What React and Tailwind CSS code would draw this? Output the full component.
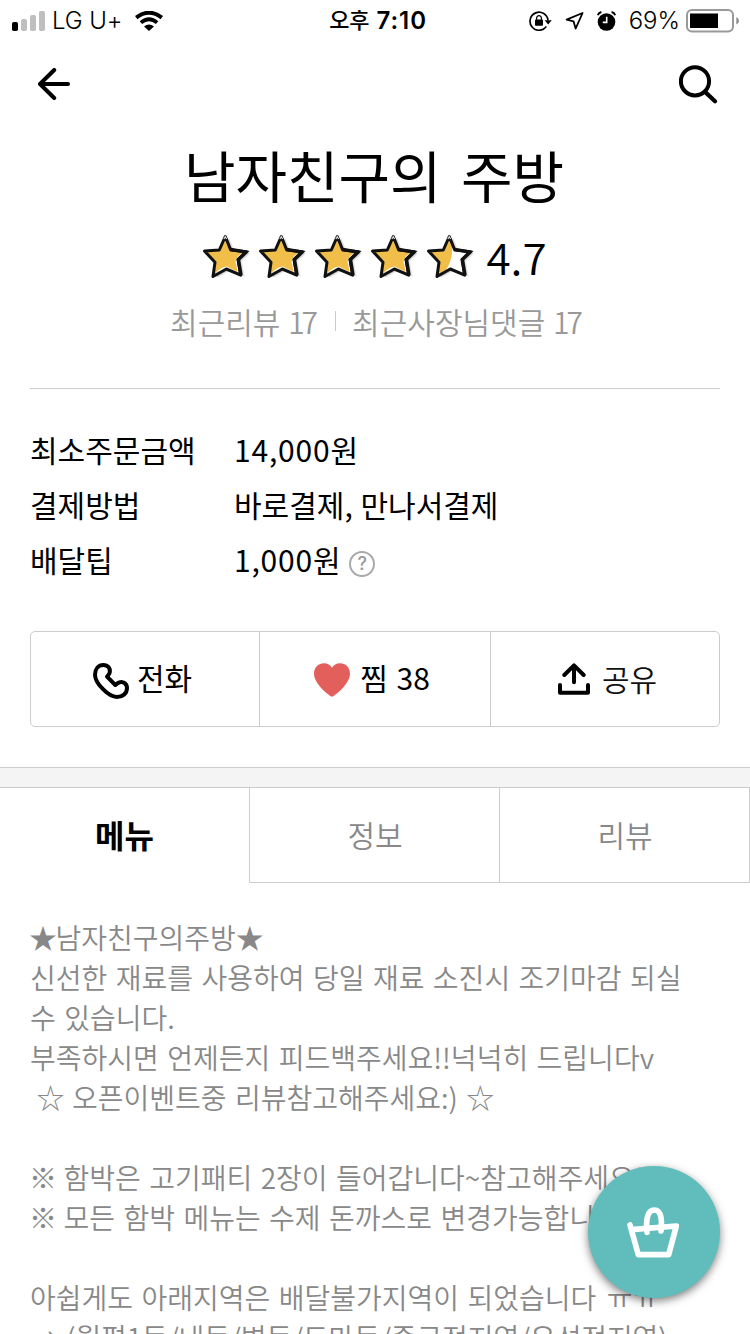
import React, { useState } from "react";

const NOTICE_LINES = [
  "신선한 재료를 사용하여 당일 재료 소진시 조기마감 되실",
  "수 있습니다.",
  "부족하시면 언제든지 피드백주세요!!넉넉히 드립니다v",
];

const INFO_ROWS = [
  { label: "최소주문금액", value: "14,000원", numeric: true },
  { label: "결제방법", value: "바로결제, 만나서결제" },
  { label: "배달팁", value: "1,000원", numeric: true, help: true },
];

const TABS = ["메뉴", "정보", "리뷰"];

const STAR_PATH =
  "M24.3 5.5L29.7 19L45.5 20.7L37 28.8L39.7 44.2L25.3 38L12 45.5L14 31.3L3.5 20L18.3 19Z";

const SignalIcon = () => (
  <svg className="h-5 w-[33px]" viewBox="0 0 33 20">
    <rect x="0" y="11" width="6" height="9" rx="1.8" fill="#000" />
    <rect x="9" y="8" width="6" height="12" rx="1.8" fill="#bfbfbf" />
    <rect x="18" y="4" width="6" height="16" rx="1.8" fill="#bfbfbf" />
    <rect x="27" y="0" width="6" height="20" rx="1.8" fill="#bfbfbf" />
  </svg>
);

const WifiIcon = () => (
  <svg className="h-5 w-7" viewBox="0 0 28 20" fill="none" stroke="#000">
    <path d="M1.2 6.6Q14 -3.2 26.8 6.6" strokeWidth="4" />
    <path d="M5.9 11.6Q14 5 22.1 11.6" strokeWidth="3.8" />
    <path d="M9 15.6Q14 11.2 19 15.6L14 20Z" fill="#000" stroke="none" />
  </svg>
);

const RotationLockIcon = () => (
  <svg className="h-5 w-[23px]" viewBox="0 0 23 20">
    <path
      d="M17.3 15.6A9 9 0 1 1 19 9.4"
      fill="none"
      stroke="#000"
      strokeWidth="1.7"
    />
    <path d="M15.6 9.2H22.8L19.2 13.4Z" />
    <rect x="6" y="8.6" width="8" height="6.2" rx="0.8" />
    <path d="M7.6 9V7.1a2.4 2.4 0 0 1 4.8 0V9" fill="none" stroke="#000" strokeWidth="1.3" />
  </svg>
);

const LocationIcon = () => (
  <svg className="h-[18px] w-[19px]" viewBox="0 0 19 18" fill="none">
    <path
      d="M17.6 1L1.6 7.7L8.6 9.4L10.6 16.6Z"
      stroke="#000"
      strokeWidth="1.8"
      strokeLinejoin="round"
    />
  </svg>
);

const AlarmIcon = () => (
  <svg className="h-5 w-[19px]" viewBox="0 0 19 20" fill="none">
    <circle cx="9.5" cy="11" r="8.8" fill="#000" />
    <path d="M0.8 4.2Q1.6 1.6 4.4 1M18.2 4.2Q17.4 1.6 14.6 1" stroke="#000" strokeWidth="1.8" />
    <path d="M9.7 5.8V11.4H5.8" stroke="#fff" strokeWidth="1.6" />
  </svg>
);

const BatteryIcon = () => (
  <svg className="h-6 w-[54px]" viewBox="0 0 54 24">
    <rect x="1" y="1" width="46" height="21.5" rx="5" fill="none" stroke="#999" strokeWidth="2" />
    <rect x="4" y="4.5" width="28" height="14.5" fill="#000" />
    <path d="M50.3 8Q53 9.3 53 11.8Q53 14.3 50.3 15.6Z" fill="#8e8e8e" />
  </svg>
);

const BackIcon = () => (
  <svg
    className="h-8 w-8"
    viewBox="0 0 32 32"
    fill="none"
    stroke="#000"
    strokeWidth="4"
    strokeLinecap="round"
    strokeLinejoin="round"
  >
    <path d="M2 16H30M16.2 2L2 16L16.2 30" />
  </svg>
);

const SearchIcon = () => (
  <svg className="h-[39px] w-[39px]" viewBox="0 0 39 39" fill="none" stroke="#000">
    <circle cx="16" cy="16.3" r="14.1" strokeWidth="4" />
    <path d="M26.3 27.1L36 36.2" strokeWidth="4.2" strokeLinecap="round" />
  </svg>
);

const RatingStar = ({ half }) => (
  <svg className="h-[50px] w-14" viewBox="0 0 56 50">
    <path d={STAR_PATH} fill="#000" opacity="0.1" transform="translate(4 1.5)" />
    <path d={STAR_PATH} fill="#000" opacity="0.16" transform="translate(2.5 1)" />
    <path d={STAR_PATH} fill="#fff" />
    {half ? (
      <path d="M24 6L18.3 19L5 21L15 31.3L12 44.5L21 39Q29 27 26.5 11Z" fill="#f1be4a" />
    ) : (
      <path
        d="M24 8L29 19.5L43 21.2Q36 24 34.5 31Q36 36 36.5 41L26 35.5Q19 36 13 44L15 31.3L5 21L18.3 19.5Z"
        fill="#f1be4a"
      />
    )}
    <path
      d={STAR_PATH}
      fill="none"
      stroke="#111"
      strokeWidth="3"
      strokeLinejoin="round"
    />
    <path d="M29.8 18.4L45 21L37.4 28.4L40 44" fill="none" stroke="#111" strokeWidth="3.4" />
    <path d="M22.9 8L24.3 5.6L25.6 8" fill="none" stroke="#ccc" strokeWidth="1.3" />
  </svg>
);

const PhoneIcon = () => (
  <svg className="mt-1 h-9 w-9" viewBox="0 0 108 108" fill="none">
    <path
      d="M6 35C6 18 16 6 31 6C45 6 53 17 50 29Q47 36 42 41L67 66Q72 61 79 58C91 54 102 63 102 75C102 92 88 102 72 102C46 102 6 60 6 35Z"
      stroke="#000"
      strokeWidth="12"
      strokeLinejoin="round"
    />
  </svg>
);

const HeartIcon = () => (
  <svg className="mt-0.5 h-[34px] w-9" viewBox="0 0 108 100">
    <path
      d="M54 100C49 100 0 62 0 31C0 12 14 0 30 0C41 0 49 5 54 13C59 5 67 0 78 0C94 0 108 12 108 31C108 62 59 100 54 100Z"
      fill="#e35f5b"
    />
  </svg>
);

const ShareIcon = () => (
  <svg
    className="h-8 w-8"
    viewBox="0 0 96 96"
    fill="none"
    stroke="#000"
    strokeWidth="12"
    strokeLinecap="round"
    strokeLinejoin="round"
  >
    <path d="M6 66V89H90V66M48 58V8M19 36L48 7L77 36" />
  </svg>
);

const BasketIcon = () => (
  <svg
    className="h-[51px] w-[52px]"
    viewBox="0 0 156 153"
    fill="none"
    stroke="#fff"
    strokeLinecap="round"
    strokeLinejoin="round"
  >
    <path d="M9 54L34 143H125L148 57L22 67" strokeWidth="17" />
    <path d="M60 76C56 36 62 9 82 9C102 9 106 36 102 72" strokeWidth="17" />
  </svg>
);

const StatusBar = () => (
  <div className="flex h-10 items-center pt-px font-['Inter','Noto_Sans_CJK_KR',sans-serif] text-[24px]">
    <div className="flex flex-1 items-center pl-3">
      <SignalIcon />
      <span className="ml-[7px] font-light tracking-[-0.1px]">LG U+</span>
      <span className="ml-[13px]">
        <WifiIcon />
      </span>
    </div>
    <div className="flex items-center pl-1 font-semibold">
      <span className="text-[22px] font-medium">오후</span>
      <span className="ml-[7px] text-[24px] tracking-[0.9px]">7:10</span>
    </div>
    <div className="flex flex-1 items-center justify-end pr-[10px]">
      <RotationLockIcon />
      <span className="ml-[13px]">
        <LocationIcon />
      </span>
      <span className="ml-[13px]">
        <AlarmIcon />
      </span>
      <span className="ml-[13px] mr-1.5 text-[24px] font-light">69%</span>
      <BatteryIcon />
    </div>
  </div>
);

const InfoRow = ({ label, value, numeric, help }) => (
  <div className="flex h-[55px] items-center text-[30px]">
    <span className="w-[204px]">{label}</span>
    <span className={numeric ? "tracking-[0.8px]" : "[word-spacing:1px]"}>{value}</span>
    {help ? (
      <span className="ml-2 mt-2 flex h-[26px] w-[26px] items-center justify-center rounded-full border-2 border-[#aaa] font-['Inter',sans-serif] text-[18px] font-medium text-[#999]">
        ?
      </span>
    ) : null}
  </div>
);

export default function App() {
  const [activeTab, setActiveTab] = useState("메뉴");

  return (
    <div className="relative h-[1334px] w-[750px] overflow-hidden bg-white font-['Noto_Sans_CJK_KR',sans-serif] text-black">
      <StatusBar />

      <header className="flex h-[88px] items-center justify-between pl-[38px] pr-8">
        <button aria-label="뒤로">
          <BackIcon />
        </button>
        <button aria-label="검색">
          <SearchIcon />
        </button>
      </header>

      <section className="mx-[30px] flex h-[261px] flex-col items-center border-b border-[#ccc]">
        <h1 className="h-[103px] pr-0.5 text-[56px] font-normal leading-[92px] [word-spacing:7px]">
          남자친구의 주방
        </h1>
        <div className="flex h-[50px] items-center pr-0.5">
          <RatingStar />
          <RatingStar />
          <RatingStar />
          <RatingStar />
          <RatingStar half />
          <span className="ml-[5px] text-[44px] font-[350] leading-[50px]">4.7</span>
        </div>
        <div className="mt-5 flex h-10 items-center text-[30px] font-[350] text-[#999] [word-spacing:1px]">
          <span>
            최근리뷰 <span className="tracking-[-3px]">17</span>
          </span>
          <span className="ml-5 mr-4 h-5 w-px bg-[#ccc]" />
          <span>
            최근사장님댓글 <span className="tracking-[-3px]">17</span>
          </span>
        </div>
      </section>

      <section className="px-[30px] pt-[33px]">
        {INFO_ROWS.map((row) => (
          <InfoRow key={row.label} {...row} />
        ))}
      </section>

      <section className="mx-[30px] mt-[44px] flex h-24 rounded-[5px] border border-[#ccc] text-[30px]">
        <button className="flex w-[229px] items-center justify-center gap-2 border-r border-[#ccc] pr-[5px]">
          <PhoneIcon />
          <span className="pb-[3px]">전화</span>
        </button>
        <button className="flex w-[231px] items-center justify-center gap-2.5 border-r border-[#ccc] pr-1.5">
          <HeartIcon />
          <span className="pb-[3px] [word-spacing:2px]">찜 38</span>
        </button>
        <button className="flex flex-1 items-center justify-center gap-3 pl-[5px]">
          <ShareIcon />
          <span className="pb-0.5 font-[350] text-[#111]">공유</span>
        </button>
      </section>

      <div className="mt-10 h-[21px] border-y border-[#ccc] bg-[#f4f4f4]" />

      <nav className="flex h-[95px] border-r border-[#ccc] text-[30px]">
        {TABS.map((tab) => (
          <button
            key={tab}
            onClick={() => setActiveTab(tab)}
            className={
              tab === activeTab
                ? "w-[249px] pb-1 text-[32px] font-bold"
                : "w-[250px] border-b border-l border-[#ccc] pb-0.5 pl-px font-[350] text-[#888]"
            }
          >
            {tab}
          </button>
        ))}
      </nav>

      <section className="whitespace-pre px-[30px] pt-[34px] text-[28px] font-[350] leading-[40px] text-[#888] [word-spacing:2.2px]">
        <p>
          <span className="-ml-px tracking-[-1.5px]">★</span>남자친구의주방★
        </p>
        {NOTICE_LINES.map((line) => (
          <p key={line}>{line}</p>
        ))}
        <p>
          {" "}
          <span className="-ml-0.5 tracking-[-1px]">☆</span> 오픈이벤트중 리뷰참고해주세요:){" "}
          <span>☆</span>
        </p>
        <p className="mt-10">
          <span className="-ml-px tracking-[-2px]">※</span> 함박은 고기패티 2장이 들어갑니다~참고해주세요!!
        </p>
        <p>
          <span className="-ml-px tracking-[-2px]">※</span> 모든 함박 메뉴는 수제 돈까스로 변경가능합니다
        </p>
        <p className="mt-10">
          아쉽게도 아래지역은 배달불가지역이 되었습니다{" "}
          <span className="ml-0.5 tracking-[1.5px]">ㅠㅠ</span>
        </p>
        <p className="tracking-[-0.1px]">→ (월평1동/내동/변동/도마동/중구전지역/유성전지역)</p>
      </section>

      <button
        aria-label="장바구니"
        className="absolute left-[588px] top-[1166px] flex h-[132px] w-[132px] items-center justify-center rounded-full bg-[#60bdbc] pr-0.5 shadow-[0_3px_8px_rgba(0,0,0,0.5)]"
      >
        <BasketIcon />
      </button>
    </div>
  );
}
